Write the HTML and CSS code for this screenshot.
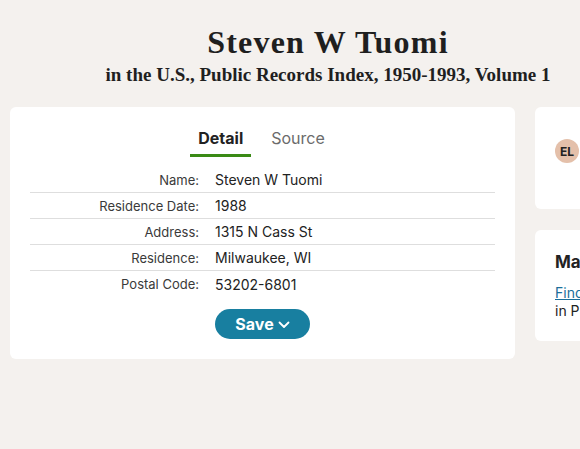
FILE: index.html
```html
<!DOCTYPE html>
<html>
<head>
<meta charset="utf-8">
<link rel="stylesheet" href="styles.css">
</head>
<body>
<div class="page">
  <header class="head">
    <h1 class="title">Steven W Tuomi</h1>
    <p class="subtitle">in the U.S., Public Records Index, 1950-1993, Volume 1</p>
  </header>
  <div class="main">
    <section class="card record">
      <nav class="tabs">
        <span class="tab active">Detail</span>
        <span class="tab">Source</span>
      </nav>
      <div class="table">
        <div class="row"><span class="label">Name:</span><span class="value">Steven W Tuomi</span></div>
        <div class="row"><span class="label">Residence Date:</span><span class="value">1988</span></div>
        <div class="row"><span class="label">Address:</span><span class="value">1315 N Cass St</span></div>
        <div class="row"><span class="label">Residence:</span><span class="value">Milwaukee, WI</span></div>
        <div class="row"><span class="label">Postal Code:</span><span class="value">53202-6801</span></div>
      </div>
      <div class="actions">
        <button class="save">Save <svg class="chev" width="12" height="8" viewBox="0 0 12 8"><path d="M1.5 1.5 L6 6 L10.5 1.5" fill="none" stroke="#fff" stroke-width="1.8" stroke-linecap="round" stroke-linejoin="round"/></svg></button>
      </div>
    </section>
    <aside class="side">
      <section class="card owner">
        <span class="avatar">EL</span>
      </section>
      <section class="card more">
        <h2 class="more-title">Make a discovery</h2>
        <p class="more-text"><a href="#" class="link">Find Steven W Tuomi</a><br>in Public Member Trees</p>
      </section>
    </aside>
  </div>
</div>
</body>
</html>
```

FILE: styles.css
```css
html, body {
  margin: 0;
  padding: 0;
  overflow: hidden;
  background: #f4f1ee;
}
body {
  font-family: Inter, "Noto Sans", Arial, sans-serif;
  color: #222;
}
.page {
  width: 636px;
  margin-left: 10px;
}
.head {
  text-align: center;
  padding-top: 24px;
  height: 107px;
  box-sizing: border-box;
}
.title {
  margin: 0;
  font-family: "Liberation Serif", "Times New Roman", serif;
  font-weight: 700;
  font-size: 32px;
  line-height: 36px;
  letter-spacing: 1.2px;
  color: #1f1f1f;
}
.subtitle {
  margin: 3px 0 0;
  font-family: "Liberation Serif", "Times New Roman", serif;
  font-weight: 700;
  font-size: 19px;
  line-height: 24px;
  color: #1f1f1f;
}
.main {
  display: flex;
  gap: 20px;
  align-items: flex-start;
}
.card {
  background: #fff;
  border-radius: 6px;
  box-sizing: border-box;
}
.record {
  width: 505px;
  height: 252px;
  padding: 20px 20px;
}
.tabs {
  display: flex;
  justify-content: center;
  gap: 10px;
}
.tab {
  font-size: 16px;
  line-height: 22px;
  padding: 0 10px 5px;
  color: #6b6b6b;
  border-bottom: 3px solid transparent;
}
.tab.active {
  font-weight: 700;
  color: #222;
  border-bottom-color: #3a8a16;
  padding: 0 8px 5px;
}
.table {
  margin-top: 10px;
}
.row {
  display: grid;
  grid-template-columns: 169px 1fr;
  column-gap: 16px;
  align-items: center;
  height: 26px;
  border-bottom: 1px solid #dedede;
  box-sizing: border-box;
}
.row:last-child {
  border-bottom: none;
}
.label {
  text-align: right;
  font-size: 13px;
  color: #3a3a3a;
}
.value {
  font-size: 14px;
  color: #222;
}
.actions {
  display: grid;
  grid-template-columns: 169px 1fr;
  column-gap: 16px;
  margin-top: 12px;
}
.save {
  grid-column: 2;
  justify-self: start;
  width: 95px;
  height: 30px;
  border: none;
  border-radius: 15px;
  background: #187fa0;
  color: #fff;
  font-family: Inter, "Noto Sans", Arial, sans-serif;
  font-size: 16px;
  font-weight: 700;
  display: flex;
  align-items: center;
  justify-content: center;
  gap: 4px;
  padding: 0;
}
.chev {
  display: block;
  margin-top: 1px;
}
.side {
  width: 111px;
  display: flex;
  flex-direction: column;
  gap: 21px;
}
.owner {
  height: 102px;
  padding: 32px 20px;
}
.avatar {
  display: flex;
  align-items: center;
  justify-content: center;
  width: 24px;
  height: 24px;
  border-radius: 50%;
  background: #e4c0aa;
  font-size: 12px;
  font-weight: 700;
  color: #222;
}
.more {
  height: 111px;
  padding: 20px 20px;
  white-space: nowrap;
  overflow: hidden;
}
.more-title {
  margin: 0;
  font-size: 17px;
  line-height: 24px;
  font-weight: 700;
  color: #222;
}
.more-text {
  margin: 10px 0 0;
  font-size: 14px;
  line-height: 18px;
  color: #222;
}
.link {
  color: #1a6e9a;
  text-decoration: underline;
}
```
